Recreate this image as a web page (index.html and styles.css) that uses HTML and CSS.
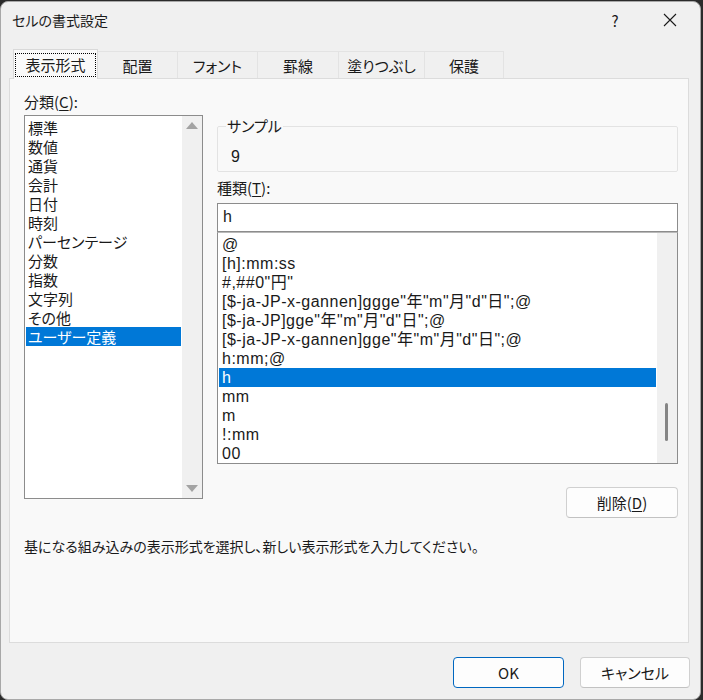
FILE: index.html
```html
<!DOCTYPE html>
<html lang="ja">
<head>
    <meta charset="UTF-8">
    <title>セルの書式設定</title>
    <link rel="stylesheet" href="styles.css">
</head>
<body>
    <div class="dialog">
        <div class="titlebar">
            <span class="title">セルの書式設定</span>
            <span class="help">?</span>
            <span class="close">
                <svg width="14" height="14" viewBox="0 0 14 14"><path d="M1 1L13 13M13 1L1 13" stroke="#1a1a1a" stroke-width="1.1" fill="none"/></svg>
            </span>
        </div>

        <div class="tabs">
            <div class="tab active"><span class="focus">表示形式</span></div>
            <div class="tab w80">配置</div>
            <div class="tab w80">フォント</div>
            <div class="tab w81">罫線</div>
            <div class="tab w86">塗りつぶし</div>
            <div class="tab w79">保護</div>
        </div>

        <div class="panel">
            <div class="columns">
                <div class="left">
                    <div class="label">分類(<u>C</u>):</div>
                    <div class="listbox category">
                        <ul class="items">
                            <li>標準</li>
                            <li>数値</li>
                            <li>通貨</li>
                            <li>会計</li>
                            <li>日付</li>
                            <li>時刻</li>
                            <li>パーセンテージ</li>
                            <li>分数</li>
                            <li>指数</li>
                            <li>文字列</li>
                            <li>その他</li>
                            <li class="selected">ユーザー定義</li>
                        </ul>
                        <div class="scrollbar">
                            <span class="arrow up"></span>
                            <span class="arrow down"></span>
                        </div>
                    </div>
                </div>

                <div class="right">
                    <fieldset class="sample">
                        <legend>サンプル</legend>
                        <div class="sample-value">9</div>
                    </fieldset>
                    <div class="label type-label">種類(<u>T</u>):</div>
                    <div class="input">h</div>
                    <div class="listbox formats">
                        <ul class="items latin">
                            <li>@</li>
                            <li>[h]:mm:ss</li>
                            <li>#,##0"円"</li>
                            <li>[$-ja-JP-x-gannen]ggge"年"m"月"d"日";@</li>
                            <li>[$-ja-JP]gge"年"m"月"d"日";@</li>
                            <li>[$-ja-JP-x-gannen]gge"年"m"月"d"日";@</li>
                            <li>h:mm;@</li>
                            <li class="selected">h</li>
                            <li>mm</li>
                            <li>m</li>
                            <li>!:mm</li>
                            <li>00</li>
                        </ul>
                        <div class="scrollbar">
                            <span class="thumb"></span>
                        </div>
                    </div>
                    <div class="delete-row">
                        <button class="btn">削除(<u>D</u>)</button>
                    </div>
                </div>
            </div>
            <p class="hint">基になる組み込みの表示形式を選択し、新しい表示形式を入力してください。</p>
        </div>

        <div class="footer">
            <button class="btn default">OK</button>
            <button class="btn cancel">キャンセル</button>
        </div>
    </div>
</body>
</html>
```

FILE: styles.css
```css
body {
    margin: 0;
    background-color: #2b2b2b;
    font-family: "Noto Sans CJK JP", "Noto Sans", sans-serif;
    font-feature-settings: "palt";
    color: #1a1a1a;
}
.dialog {
    display: flex;
    flex-direction: column;
    width: 701px;
    height: 699px;
    margin: 1px 0 0 0;
    box-sizing: border-box;
    border: 1px solid #a8a8a8;
    border-radius: 8px;
    background-color: #f0f0f0;
    overflow: hidden;
}

/* title bar */
.titlebar {
    display: flex;
    align-items: center;
    height: 36px;
    padding-left: 11px;
    font-size: 14px;
}
.title {
    flex: 1;
}
.help {
    width: 20px;
    margin-right: 38px;
    font-size: 15px;
    text-align: center;
}
.close {
    display: flex;
    margin-right: 23px;
}

/* tabs */
.tabs {
    display: flex;
    align-items: flex-end;
    height: 40px;
    padding-left: 12px;
    font-size: 15px;
}
.tab {
    display: flex;
    align-items: center;
    justify-content: center;
    height: 27px;
    box-sizing: border-box;
    border: 1px solid #e3e3e3;
    border-bottom: none;
    border-left: none;
    background-color: #f0f0f0;
}
.tab.active {
    width: 85px;
    height: 30px;
    border: 1px solid #d9d9d9;
    border-bottom: none;
    background-color: #f9f9f9;
    margin-bottom: -1px;
    position: relative;
    z-index: 1;
}
.tab .focus {
    display: flex;
    align-items: center;
    justify-content: center;
    width: 81px;
    height: 24px;
    box-sizing: border-box;
    border: 1px dotted #000;
}
.w80 { width: 80px; }
.w81 { width: 81px; }
.w86 { width: 86px; }
.w79 { width: 79px; }

/* tab page */
.panel {
    height: 565px;
    margin: 0 11px 0 8px;
    box-sizing: border-box;
    border: 1px solid #dcdcdc;
    background-color: #f9f9f9;
    padding: 13px 0 0 14px;
}
.columns {
    display: flex;
    gap: 14px;
}
.left {
    width: 179px;
}
.right {
    width: 461px;
    padding-top: 26px;
}
.label {
    font-size: 15px;
    line-height: 20px;
    height: 23px;
}
u {
    text-decoration-thickness: 1px;
    text-underline-offset: 2px;
}

.listbox {
    display: flex;
    box-sizing: border-box;
    border: 1px solid #8c8c8c;
    background-color: #fff;
}
.items {
    flex: 1;
    list-style: none;
    margin: 0;
    padding: 2px 1px 0 1px;
    font-size: 15px;
    line-height: 19px;
}
.items li {
    padding-left: 2px;
    height: 19px;
    white-space: nowrap;
}
.items li.selected {
    background-color: #0078d7;
    color: #fff;
}
.category {
    height: 384px;
}
.scrollbar {
    position: relative;
    width: 20px;
    background-color: #f0f0f0;
}
.arrow {
    position: absolute;
    left: 4px;
    width: 0;
    height: 0;
    border-left: 6px solid transparent;
    border-right: 6px solid transparent;
}
.arrow.up {
    top: 6px;
    border-bottom: 7px solid #a3a3a3;
}
.arrow.down {
    bottom: 6px;
    border-top: 7px solid #a3a3a3;
}

/* sample group */
.sample {
    margin: 0;
    height: 54px;
    box-sizing: border-box;
    padding: 0 0 0 13px;
    border: 1px solid #e3e3e3;
    border-radius: 2px;
}
.sample legend {
    padding: 0 1px;
    margin-left: -5px;
    font-size: 15px;
    line-height: 16px;
}
.sample-value {
    font-family: "Liberation Sans", sans-serif;
    font-size: 16px;
    margin-top: 14px;
}
.type-label {
    margin-top: 6px;
    height: 25px;
}
.input {
    height: 29px;
    box-sizing: border-box;
    border: 1px solid #8c8c8c;
    background-color: #fff;
    padding-left: 5px;
    font-family: "Liberation Sans", sans-serif;
    font-size: 16px;
    line-height: 26px;
}
.formats {
    height: 232px;
    border-top-color: #b9b9b9;
}
.latin {
    font-family: "Liberation Sans", "Noto Sans CJK JP", sans-serif;
    font-size: 16px;
    letter-spacing: 0.5px;
}
.latin li {
    padding-left: 3px;
}
.thumb {
    position: absolute;
    left: 8px;
    top: 170px;
    width: 3px;
    height: 38px;
    border-radius: 2px;
    background-color: #858585;
}
.delete-row {
    display: flex;
    justify-content: flex-end;
    margin-top: 23px;
}

/* buttons */
.btn {
    width: 112px;
    height: 31px;
    box-sizing: border-box;
    border: 1px solid #d0d0d0;
    border-bottom-color: #c2c2c2;
    border-radius: 4px;
    background-color: #fdfdfd;
    font-family: "Noto Sans CJK JP", sans-serif;
    font-feature-settings: "palt";
    font-size: 15px;
    color: #1a1a1a;
    padding: 0;
}
.btn.default {
    width: 111px;
    border: 1px solid #0067c0;
}
.btn.cancel {
    width: 110px;
}
.hint {
    margin: 18px 0 0 0;
    font-size: 14px;
}
.footer {
    display: flex;
    justify-content: flex-end;
    gap: 16px;
    padding: 14px 10px 0 0;
}
```
